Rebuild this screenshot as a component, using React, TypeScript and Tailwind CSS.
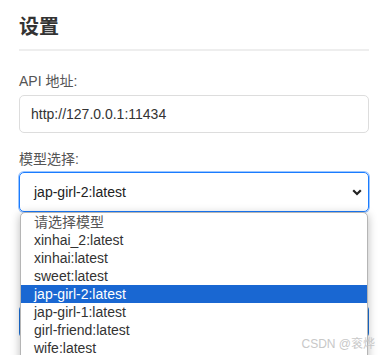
import React from "react";

const options = [
  "请选择模型",
  "xinhai_2:latest",
  "xinhai:latest",
  "sweet:latest",
  "jap-girl-2:latest",
  "jap-girl-1:latest",
  "girl-friend:latest",
  "wife:latest",
];

export default function App() {
  return (
    <div
      className="relative w-[381px] h-[355px] overflow-hidden bg-white text-[#333]"
      style={{ fontFamily: '"Liberation Sans", Arial, "Noto Sans CJK SC", sans-serif' }}
    >
      <div className="ml-[19px] w-[350px] flex flex-col">
        <h1 className="pt-[13px] pb-[8px] h-[51px] text-[20px] leading-[28px] font-bold text-[#333] border-b-2 border-[#eeeeee]">
          设置
        </h1>

        <label className="mt-[20px] text-[14px] leading-[20px] text-[#555]">API 地址:</label>
        <div className="mt-[4px] h-[38px] border border-[#dddddd] rounded-[5px] flex items-center text-[14px] text-[#333]">
          <span className="ml-[11px]">http://127.0.0.1:11434</span>
        </div>

        <label className="mt-[16px] text-[14px] leading-[20px] text-[#555]">模型选择:</label>
        <div className="mt-[3px] h-[40px] border border-[#1a7cff] rounded-[5px] ring-1 ring-[#9cc6ff] pl-3.5 pr-1.5 flex flex-row items-center gap-2 text-[14px] text-[#222]">
          <div className="grow">jap-girl-2:latest</div>
          <svg width="10" height="7" viewBox="0 0 10 7" className="shrink-0">
            <path d="M1.2 1.2 L5 5 L8.8 1.2" fill="none" stroke="#222" strokeWidth="2.2" />
          </svg>
        </div>

        <div className="mt-[93px] h-[33px] rounded-[5px] bg-[#1a6fd8]" />
      </div>

      <div className="absolute left-[20px] top-[212px] w-[348px] h-[160px] bg-white border border-[#b5b5b5] rounded-t-[5px] shadow-[0_2px_10px_rgba(0,0,0,0.28)] flex flex-col">
        {options.map((o, i) => (
          <div
            key={o}
            className={
              i === 4
                ? "h-[18px] leading-[18px] pl-[13px] text-[14px] bg-[#1967d2] text-white"
                : i === 0
                ? "h-[18px] leading-[18px] pl-[13px] text-[14px] text-[#555]"
                : "h-[18px] leading-[18px] pl-[13px] text-[14px] text-[#333]"
            }
          >
            {o}
          </div>
        ))}
      </div>

      <div className="absolute right-[6px] top-[336px] text-[12px] leading-[16px] text-[#c8c8c8]">
        CSDN @衮烨
      </div>
    </div>
  );
}
